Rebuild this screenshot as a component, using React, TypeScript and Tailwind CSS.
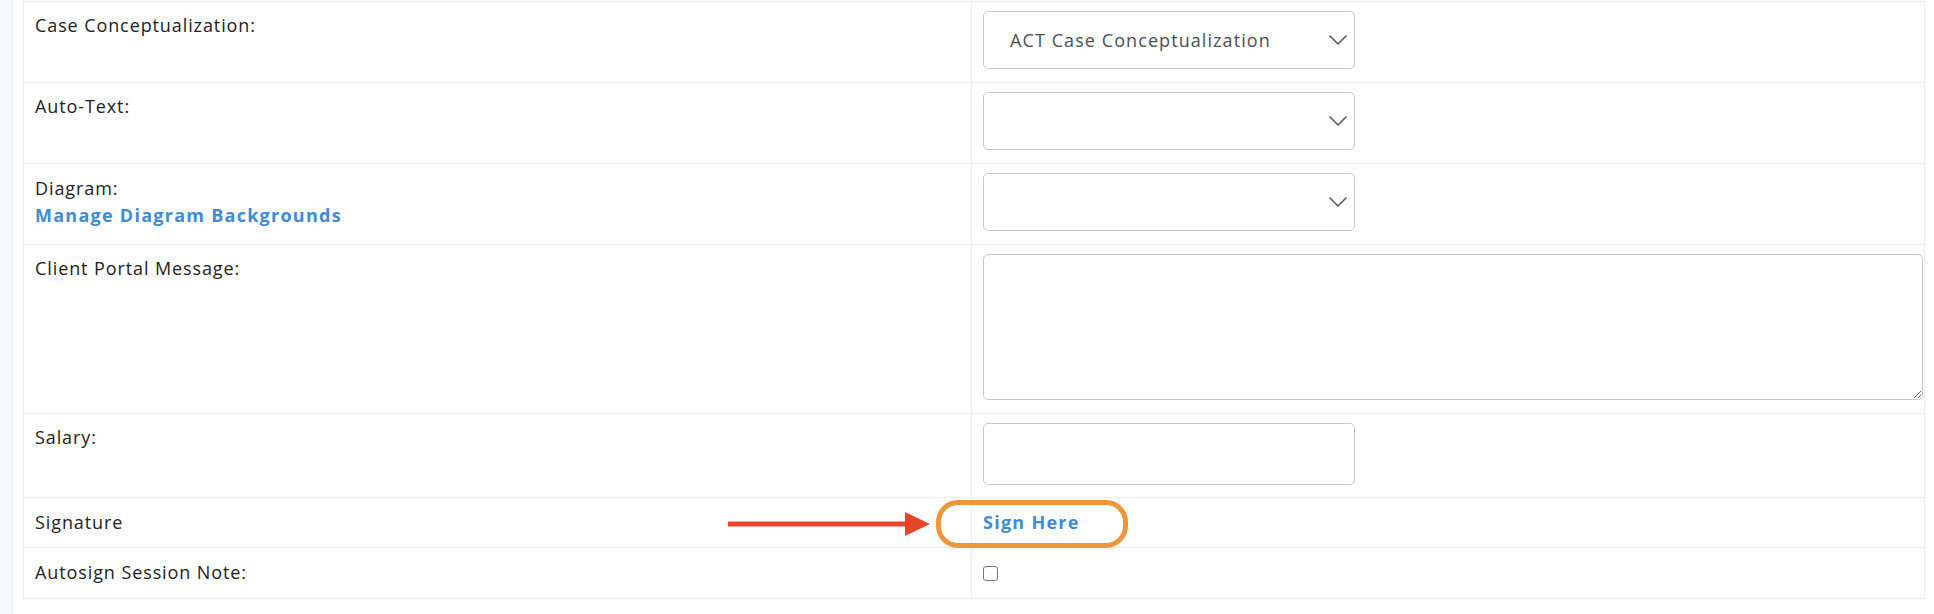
import React from 'react';

const Chevron = () => (
  <svg
    className="pointer-events-none absolute right-[7px] top-1/2 -translate-y-1/2"
    width="18"
    height="11"
    viewBox="0 0 18 11"
    fill="none"
  >
    <path d="M1 1.5L9 9.5L17 1.5" stroke="#555a60" strokeWidth="1.6" strokeLinecap="round" strokeLinejoin="round" />
  </svg>
);

const Select: React.FC<{ value?: string }> = ({ value }) => (
  <div className="relative h-[58px] w-[372px] rounded-[5px] border border-[#c9c9c9] bg-white">
    <div className="flex h-full items-center pl-[26px] tracking-[0.06em] text-[#4b4f54]">{value}</div>
    <Chevron />
  </div>
);

const Row: React.FC<{ label: React.ReactNode; height: string; last?: boolean; children?: React.ReactNode }> = ({
  label,
  height,
  last,
  children,
}) => (
  <div className={`flex ${height} ${last ? '' : 'border-b border-[#e6eff7]'}`}>
    <div className="w-[948px] shrink-0 border-r border-[#e6eff7] pl-[11px] pr-3 pt-[10px]">{label}</div>
    <div className="relative flex-1 px-[11px] pt-[9px]">{children}</div>
  </div>
);

export default function App() {
  return (
    <div
      className="flex min-h-screen bg-white text-[18px] leading-[27px] text-[#222]"
      style={{ fontFamily: '"Open Sans", "Liberation Sans", sans-serif' }}
    >
      {/* left rail */}
      <div className="w-[13px] shrink-0 border-r border-[#e4eef8] bg-[#f5f9fd]" />

      <div className="ml-[10px] pt-px">
        <div className="w-[1902px] border border-[#e6eff7] tracking-[0.05em]">
          <Row label="Case Conceptualization:" height="h-[81px]">
            <Select value="ACT Case Conceptualization" />
          </Row>
          <Row label="Auto-Text:" height="h-[81px]">
            <Select />
          </Row>
          <Row
            height="h-[81px]"
            label={
              <>
                <div className="pt-px">Diagram:</div>
                <a href="#" className="block font-bold tracking-[0.07em] text-[#3f8bd6]">
                  Manage Diagram Backgrounds
                </a>
              </>
            }
          >
            <Select />
          </Row>
          <Row label="Client Portal Message:" height="h-[169px]">
            <textarea className="block h-[146px] w-[940px] resize rounded-[5px] border border-[#c9c9c9] outline-none" />
          </Row>
          <Row label="Salary:" height="h-[84px]">
            <input className="block h-[62px] w-[372px] rounded-[5px] border border-[#c9c9c9] outline-none" />
          </Row>
          <Row label={<div className="pt-px">Signature</div>} height="h-[50px]">
            <a href="#" className="block pt-[2px] font-bold tracking-[0.07em] text-[#3f8bd6]">
              Sign Here
            </a>
            {/* annotation: arrow + highlight */}
            <svg
              className="absolute left-[-244px] top-[14px]"
              width="202"
              height="24"
              viewBox="0 0 202 24"
            >
              <line x1="0" y1="12" x2="180" y2="12" stroke="#e8432b" strokeWidth="5" />
              <polygon points="177,0 202,12 177,24" fill="#e8432b" />
            </svg>
            <div className="pointer-events-none absolute left-[-36px] top-[2px] h-[48px] w-[192px] rounded-[22px] border-[5px] border-[#f0963a]" />
          </Row>
          <Row label={<div className="pt-px">Autosign Session Note:</div>} height="h-[50px]" last>
            <input
              type="checkbox"
              className="mt-[9px] block h-[15px] w-[15px] appearance-none rounded-[3px] border-[1.5px] border-[#777]"
            />
          </Row>
        </div>
      </div>
    </div>
  );
}
